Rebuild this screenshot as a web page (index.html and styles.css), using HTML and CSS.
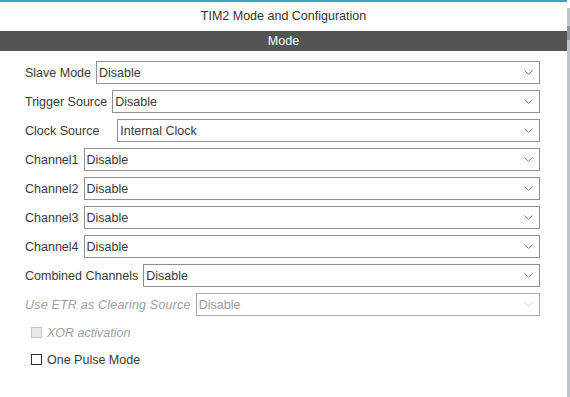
FILE: index.html
```html
<!DOCTYPE html>
<html lang="en">
<head>
  <meta charset="UTF-8" />
  <title>TIM2 Mode and Configuration</title>
  <link rel="stylesheet" href="styles.css">
</head>
<body>
  <div class="window">
    <main class="panel">
      <h1 class="title">TIM2 Mode and Configuration</h1>
      <div class="section-bar">Mode</div>

      <div class="form">
        <div class="row">
          <span class="label">Slave Mode</span>
          <div class="combo"><span>Disable</span>
            <svg class="chev" width="9" height="5" viewBox="0 0 9 5"><path d="M0.5 0.5 L4.5 4.5 L8.5 0.5" /></svg>
          </div>
        </div>
        <div class="row">
          <span class="label">Trigger Source</span>
          <div class="combo"><span>Disable</span>
            <svg class="chev" width="9" height="5" viewBox="0 0 9 5"><path d="M0.5 0.5 L4.5 4.5 L8.5 0.5" /></svg>
          </div>
        </div>
        <div class="row">
          <span class="label label-wide">Clock Source</span>
          <div class="combo"><span>Internal Clock</span>
            <svg class="chev" width="9" height="5" viewBox="0 0 9 5"><path d="M0.5 0.5 L4.5 4.5 L8.5 0.5" /></svg>
          </div>
        </div>
        <div class="row">
          <span class="label">Channel1</span>
          <div class="combo"><span>Disable</span>
            <svg class="chev" width="9" height="5" viewBox="0 0 9 5"><path d="M0.5 0.5 L4.5 4.5 L8.5 0.5" /></svg>
          </div>
        </div>
        <div class="row">
          <span class="label">Channel2</span>
          <div class="combo"><span>Disable</span>
            <svg class="chev" width="9" height="5" viewBox="0 0 9 5"><path d="M0.5 0.5 L4.5 4.5 L8.5 0.5" /></svg>
          </div>
        </div>
        <div class="row">
          <span class="label">Channel3</span>
          <div class="combo"><span>Disable</span>
            <svg class="chev" width="9" height="5" viewBox="0 0 9 5"><path d="M0.5 0.5 L4.5 4.5 L8.5 0.5" /></svg>
          </div>
        </div>
        <div class="row">
          <span class="label">Channel4</span>
          <div class="combo"><span>Disable</span>
            <svg class="chev" width="9" height="5" viewBox="0 0 9 5"><path d="M0.5 0.5 L4.5 4.5 L8.5 0.5" /></svg>
          </div>
        </div>
        <div class="row">
          <span class="label">Combined Channels</span>
          <div class="combo"><span>Disable</span>
            <svg class="chev" width="9" height="5" viewBox="0 0 9 5"><path d="M0.5 0.5 L4.5 4.5 L8.5 0.5" /></svg>
          </div>
        </div>
        <div class="row disabled">
          <span class="label">Use ETR as Clearing Source</span>
          <div class="combo"><span>Disable</span>
            <svg class="chev" width="9" height="5" viewBox="0 0 9 5"><path d="M0.5 0.5 L4.5 4.5 L8.5 0.5" /></svg>
          </div>
        </div>

        <div class="checks">
          <label class="check disabled"><span class="box"></span>XOR activation</label>
          <label class="check"><span class="box"></span>One Pulse Mode</label>
        </div>
      </div>
    </main>
    <div class="scrollbar"><div class="thumb"></div></div>
  </div>
</body>
</html>
```

FILE: styles.css
```css
* {
  margin: 0;
  padding: 0;
  box-sizing: border-box;
}

html, body {
  width: 100%;
  height: 100%;
  background: #ffffff;
  font-family: "Liberation Sans", Arial, sans-serif;
  font-size: 12.5px;
  color: #3a3a3a;
}

.window {
  display: flex;
  height: 100%;
}

/* Main panel */
.panel {
  flex: 1;
  border-top: 2px solid #34a6de;
}

.title {
  font-size: 12.5px;
  font-weight: normal;
  color: #333;
  text-align: center;
  height: 29px;
  line-height: 28px;
}

.section-bar {
  height: 20px;
  line-height: 20px;
  background: #535554;
  color: #ffffff;
  text-align: center;
}

.form {
  padding: 10px 27px 0 25px;
}

/* Rows with a combo box */
.row {
  display: flex;
  align-items: center;
  height: 23px;
  margin-bottom: 6px;
}

.label {
  white-space: nowrap;
  margin-right: 5px;
}

.label-wide {
  margin-right: 18px;
}

.combo {
  flex: 1;
  height: 23px;
  border: 1px solid #8d8f90;
  display: flex;
  align-items: center;
  justify-content: space-between;
  padding: 0 6px 0 2px;
}

.chev path {
  fill: none;
  stroke: #8a8a8a;
  stroke-width: 1;
}

.row.disabled .label {
  font-style: italic;
  color: #a0a0a0;
  letter-spacing: 0.2px;
}

.row.disabled .combo {
  border-color: #a9abac;
  color: #9a9a9a;
}

.row.disabled .chev path {
  stroke: #cfcfcf;
}

/* Checkboxes */
.checks {
  display: flex;
  flex-direction: column;
  gap: 10px;
  padding: 2px 0 0 6px;
}

.check {
  display: flex;
  align-items: center;
  height: 17px;
}

.check .box {
  width: 11px;
  height: 11px;
  border: 1px solid #333;
  background: #fff;
  margin-right: 5px;
}

.check.disabled {
  font-style: italic;
  color: #a0a0a0;
}

.check.disabled .box {
  border-color: #c2c2c2;
  background: #e9e9e9;
}

/* Side scrollbar strip */
.scrollbar {
  width: 3px;
  background: #bcc6cc;
  padding-top: 8px;
  border-top: 8px solid #fff;
}

.thumb {
  height: 14px;
  margin-top: 10px;
  background: #8d969b;
}
```
